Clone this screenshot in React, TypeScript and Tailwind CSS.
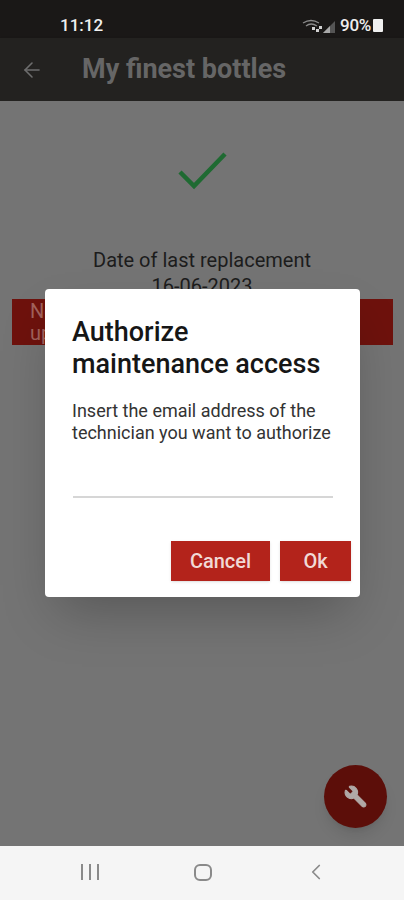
import { ArrowLeft, ChevronLeft, Wrench } from 'lucide-react';

const StatusIcons = () => (
  <div className="flex items-center">
    <svg width="34" height="16" viewBox="0 0 34 16" className="mr-[4px]">
      <path d="M1 5 Q9 0 17 5" stroke="#8a8a8a" strokeWidth="1.3" fill="none" />
      <path d="M4 8 Q9 4 15 8" stroke="#8a8a8a" strokeWidth="1.3" fill="none" />
      <rect x="10" y="9" width="3" height="3" fill="#d0d0d0" />
      <rect x="14" y="11" width="3" height="3" fill="#d0d0d0" />
      <rect x="17" y="8" width="3" height="3" fill="#d0d0d0" />
      <path d="M21 15 L33 15 L33 3 Z" fill="#555" />
      <path d="M21 15 L28 15 L28 8 Z" fill="#a8a8a8" />
    </svg>
    <span className="text-[17px] font-medium text-[#eeeeee] tracking-[-0.3px]">90%</span>
    <div className="ml-[2px] w-[10px] h-[13px] bg-[#f0f0f0] rounded-[1px]" />
  </div>
);

const App = () => {
  return (
    <div className="relative w-[404px] h-[900px] overflow-hidden flex flex-col font-['Roboto',sans-serif]">
      <div className="h-[38px] bg-[#1a1817] flex items-center justify-between pl-[60px] pr-[21px] pt-[13px]">
        <span className="text-[17px] font-medium text-[#f0f0f0]">11:12</span>
        <StatusIcons />
      </div>
      <div className="h-[63px] bg-[#232220] flex items-center pl-[20px] shadow-sm">
        <ArrowLeft size={24} strokeWidth={1.6} className="text-[#6e6e6e]" />
        <span className="ml-[38px] text-[27px] font-bold text-[#666666]">My finest bottles</span>
      </div>
      <div className="flex-1 bg-[#747474] flex flex-col items-center relative">
        <svg width="52" height="40" viewBox="0 0 52 40" className="mt-[50px] ml-[2px]">
          <path d="M3 21 L17 35 L48 3" stroke="#1f6a32" strokeWidth="4.5" fill="none" />
        </svg>
        <p className="mt-[56px] text-[20px] leading-[26px] text-[#1c1c1c] text-center">
          Date of last replacement
          <br />
          16-06-2023
        </p>
        <div className="self-stretch ml-[12px] mr-[11px] h-[46px] bg-[#6e120d] pl-[18px] py-[1px] text-[20px] leading-[22px] text-[#a2625c]">
          <div>Next</div>
          <div>up</div>
        </div>
        <button className="absolute right-[17px] bottom-[18px] w-[63px] h-[63px] rounded-full bg-[#5c0e09] flex items-center justify-center shadow-lg">
          <Wrench size={25} fill="#b0a8a6" strokeWidth={1} className="text-[#b0a8a6] -scale-x-100" />
        </button>
      </div>
      <div className="h-[54px] bg-[#f5f5f5] flex items-center pb-[2px]">
        <div className="w-[90px] ml-[45px] flex justify-center">
          <div className="flex gap-[6px]">
            <div className="w-[2px] h-[16px] bg-[#8a8a8a]" />
            <div className="w-[2px] h-[16px] bg-[#8a8a8a]" />
            <div className="w-[2px] h-[16px] bg-[#8a8a8a]" />
          </div>
        </div>
        <div className="w-[18px] h-[17px] ml-[59px] border-2 border-[#8a8a8a] rounded-[6px]" />
        <ChevronLeft size={26} strokeWidth={1.6} className="ml-[91px] text-[#8a8a8a]" />
      </div>

      <div className="absolute left-[45px] top-[289px] w-[315px] h-[308px] bg-white rounded-[4px] shadow-2xl pt-[27px] px-[27px]">
        <h2 className="text-[27px] leading-[32px] font-medium text-[#161616] whitespace-nowrap">
          Authorize
          <br />
          maintenance access
        </h2>
        <p className="mt-[20px] text-[18px] leading-[22px] text-[#333333] whitespace-nowrap">
          Insert the email address of the
          <br />
          technician you want to authorize
        </p>
        <div className="mt-[52px] ml-[1px] h-[2px] bg-[#d6d6d6] w-[260px]" />
        <div className="mt-[43px] -mr-[18px] flex justify-end gap-[10px]">
          <button className="w-[99px] h-[40px] bg-[#b3231b] text-[20px] font-medium text-[#f1d9d6] shadow-sm">Cancel</button>
          <button className="w-[71px] h-[40px] bg-[#b3231b] text-[20px] font-medium text-[#f1d9d6] shadow-sm">Ok</button>
        </div>
      </div>
    </div>
  );
};

export default App;
